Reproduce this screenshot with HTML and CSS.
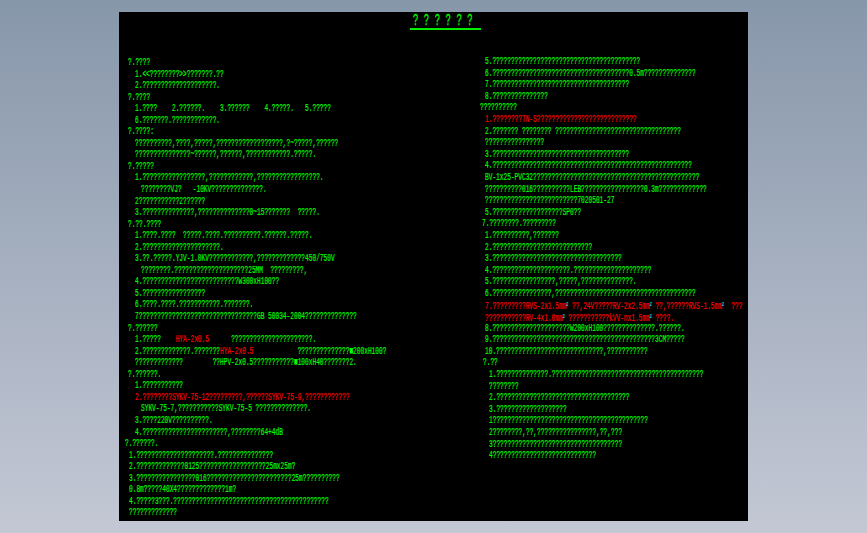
FILE: index.html
```html
<!DOCTYPE html>
<html lang="zh">
<head>
<meta charset="utf-8">
<title>CAD drawing preview</title>
<link rel="stylesheet" href="styles.css">
</head>
<body>
<main class="sheet">
  <h1 class="title"><span class="title-text">??????</span></h1>
  <div class="columns">
    <section class="col col-left">
      <p class="line in-a"><span>?.????</span></p>
      <p class="line in-b"><span>1.&lt;&lt;????????&gt;&gt;???????.??</span></p>
      <p class="line in-b"><span>2.????????????????????.</span></p>
      <p class="line in-a"><span>?.????</span></p>
      <p class="line in-b"><span>1.????    2.??????.    3.??????    4.?????.   5.?????</span></p>
      <p class="line in-b"><span>6.???????.????????????.</span></p>
      <p class="line in-a"><span>?.????:</span></p>
      <p class="line in-b"><span>??????????,????,?????,??????????????????,?~?????,??????</span></p>
      <p class="line in-b"><span>???????????????~??????,??????,????????????.?????.</span></p>
      <p class="line in-a"><span>?.?????</span></p>
      <p class="line in-b"><span>1.?????????????????,????????????,?????????????????.</span></p>
      <p class="line in-c"><span>????????VJ?   -10KV??????????????.</span></p>
      <p class="line in-b"><span>2???????????2??????</span></p>
      <p class="line in-b"><span>3.??????????????,??????????????0~15???????  ?????.</span></p>
      <p class="line in-a"><span>?.??.????</span></p>
      <p class="line in-b"><span>1.????.????  ?????.????.??????????.??????.?????.</span></p>
      <p class="line in-b"><span>2.?????????????????????.</span></p>
      <p class="line in-b"><span>3.??.?????.YJV-1.0KV????????????,?????????????450/750V</span></p>
      <p class="line in-c"><span>????????.????????????????????25MM  ?????????,</span></p>
      <p class="line in-b"><span>4.??????????????????????????W300xH100??</span></p>
      <p class="line in-b"><span>5.?????????????????</span></p>
      <p class="line in-b"><span>6.????.????.???????????.???????.</span></p>
      <p class="line in-b"><span>7????????????????????????????????GB 50034-2004??????????????</span></p>
      <p class="line in-a"><span>?.??????</span></p>
      <p class="line in-b"><span>1.?????    <b class="warn">HYA-2x0.5</b>      ??????????????????????.</span></p>
      <p class="line in-b"><span>2.?????????????.???????<b class="warn">HYA-2x0.5</b>            ??????????????■200xH100?</span></p>
      <p class="line in-b"><span>?????????????        ??HPV-2x0.5???????????■100xH40???????2.</span></p>
      <p class="line in-a"><span>?.??????.</span></p>
      <p class="line in-b"><span>1.???????????</span></p>
      <p class="line in-b warn"><span>2.????????SYKV-75-12?????????,??????SYKV-75-9,????????????</span></p>
      <p class="line in-c"><span>SYKV-75-7,???????????SYKV-75-5 ??????????????.</span></p>
      <p class="line in-b"><span>3.????220V??????????.</span></p>
      <p class="line in-b"><span>4.???????????????????????,????????64+4dB</span></p>
      <p class="line in-z"><span>?.??????.</span></p>
      <p class="line in-y"><span>1.?????????????????????.???????????????</span></p>
      <p class="line in-y"><span>2.?????????????0125??????????????????25mx25m?</span></p>
      <p class="line in-y"><span>3.????????????????016???????????????????????25m??????????</span></p>
      <p class="line in-y"><span>0.8m?????40X4?????????????1m?</span></p>
      <p class="line in-y"><span>4.?????3???.??????????????????????????????????????????</span></p>
      <p class="line in-y"><span>?????????????</span></p>
    </section>
    <section class="col col-right">
      <p class="line in-d"><span>5.????????????????????????????????????????</span></p>
      <p class="line in-d"><span>6.?????????????????????????????????????0.5m??????????????</span></p>
      <p class="line in-d"><span>7.?????????????????????????????????????</span></p>
      <p class="line in-d"><span>8.???????????????</span></p>
      <p class="line"><span>??????????</span></p>
      <p class="line in-d warn"><span>1.????????TN-S???????????????????????????</span></p>
      <p class="line in-d"><span>2.??????? ???????? ??????????????????????????????????</span></p>
      <p class="line in-d"><span>????????????????</span></p>
      <p class="line in-d"><span>3.?????????????????????????????????????</span></p>
      <p class="line in-d"><span>4.??????????????????????????????????????????????????????</span></p>
      <p class="line in-d"><span>BV-1x25-PVC32?????????????????????????????????????????????</span></p>
      <p class="line in-d"><span>??????????016??????????LEB?????????????????0.3m?????????????</span></p>
      <p class="line in-d"><span>?????????????????????????7020501-27</span></p>
      <p class="line in-d"><span>5.???????????????????SP0??</span></p>
      <p class="line in-e"><span>7.????????.?????????</span></p>
      <p class="line in-d"><span>1.??????????,???????</span></p>
      <p class="line in-d"><span>2.???????????????????????????</span></p>
      <p class="line in-d"><span>3.???????????????????????????????????</span></p>
      <p class="line in-d"><span>4.?????????????????????.?????????????????????</span></p>
      <p class="line in-d"><span>5.?????????????????,?????,??????????????.</span></p>
      <p class="line in-d"><span>6.????????????????,??????????????????????????????????????</span></p>
      <p class="line in-d warn"><span>7.?????????RVS-2x1.5mm<i class="mark">2</i> ??,24V?????RV-2x2.5mm<i class="mark">2</i> ??,??????RVS-1.5mm<i class="mark">2</i>  ???</span></p>
      <p class="line in-d warn"><span>???????????RV-4x1.0mm<i class="mark">2</i> ???????????kVV-nx1.5mm<i class="mark">2</i> ????.</span></p>
      <p class="line in-d"><span>8.?????????????????????W200xH100??????????????.??????.</span></p>
      <p class="line in-d"><span>9.????????????????????????????????????????????3CM?????</span></p>
      <p class="line in-d"><span>10.?????????????????????????????,???????????</span></p>
      <p class="line in-f"><span>?.??</span></p>
      <p class="line in-g"><span>1.??????????????.?????????????????????????????????????????</span></p>
      <p class="line in-g"><span>????????</span></p>
      <p class="line in-g"><span>2.????????????????????????????????????</span></p>
      <p class="line in-g"><span>3.???????????????????</span></p>
      <p class="line in-g"><span>1??????????????????????????????????????????</span></p>
      <p class="line in-g"><span>2????????,??,????????????????,??,???</span></p>
      <p class="line in-g"><span>3???????????????????????????????????</span></p>
      <p class="line in-g"><span>4????????????????????????????</span></p>
    </section>
  </div>
</main>
</body>
</html>
```

FILE: styles.css
```css
* { box-sizing: border-box; }

html, body { height: 100%; }

body {
  margin: 0;
  overflow: hidden;
  padding: 12px 119px;
  background: linear-gradient(180deg, #8797aa 0%, #c4c8d5 100%);
  font-family: "Liberation Mono", monospace;
}

.sheet {
  width: 629px;
  height: 509px;
  background: #000;
  color: #00ff00;
  overflow: hidden;
}

.title {
  margin: 0 0 0 291px;
  width: 71px;
  height: 18px;
  padding: 2px 0 0 3px;
  border-bottom: 2px solid #00ee00;
  font-size: 16px;
  line-height: 14px;
  font-weight: 400;
  white-space: pre;
  -webkit-text-stroke: .3px #00ff00;
}

.title-text {
  display: inline-block;
  letter-spacing: 9.8px;
  transform: scaleX(.56);
  transform-origin: left center;
}

.columns {
  display: grid;
  grid-template-columns: 361px 268px;
}

.col-left {
  padding-top: 27px;
  --pitch: 11.55px;
}

.col-right {
  padding-top: 26px;
  --pitch: 11.6px;
}

.line {
  margin: 0;
  height: var(--pitch);
  line-height: var(--pitch);
  font-size: 11px;
  font-weight: 400;
  white-space: pre;
  -webkit-text-stroke: .2px currentColor;
}

.line > span {
  display: inline-block;
  transform: scaleX(.56);
  transform-origin: left center;
}

.warn {
  color: #ff0000;
  font-weight: 400;
}

.mark {
  color: #00e5ff;
  font-style: normal;
  font-size: 6px;
  vertical-align: 3px;
}

.in-a { padding-left: 9px; }
.in-b { padding-left: 16px; }
.in-c { padding-left: 22px; }
.in-y { padding-left: 10px; }
.in-z { padding-left: 6px; }
.in-d { padding-left: 5px; }
.in-e { padding-left: 2px; }
.in-f { padding-left: 3px; }
.in-g { padding-left: 9px; }
```
